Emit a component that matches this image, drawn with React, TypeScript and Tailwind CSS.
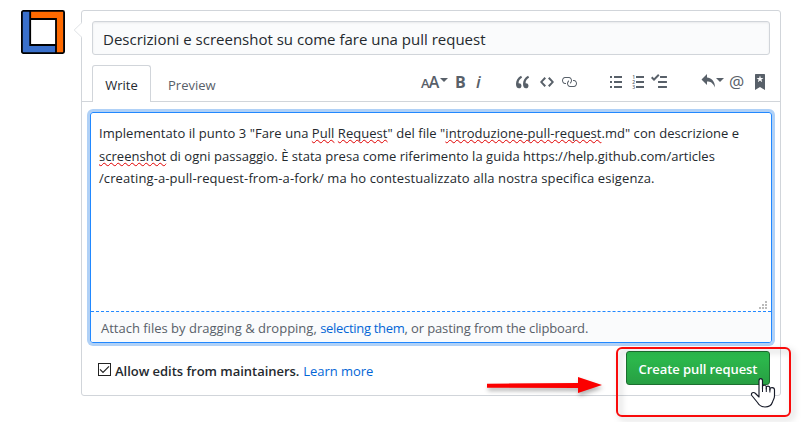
import React from "react";

type IconProps = { w: number; d: string; className?: string };

const Icon = ({ w, d, className = "" }: IconProps) => (
  <svg width={w} height="16" viewBox={`0 0 ${w} 16`} fill="currentColor" className={`block shrink-0 ${className}`}>
    <path fillRule="evenodd" d={d} />
  </svg>
);

const Caret = ({ className = "" }: { className?: string }) => (
  <svg width="8" height="16" viewBox="0 0 8 16" fill="currentColor" className={`block shrink-0 ${className}`}>
    <path d="M0 4h8L4 8z" />
  </svg>
);

const paths = {
  quote:
    "M6.16 3.5C3.73 5.06 2.55 6.67 2.55 9.36c.16-.05.3-.05.44-.05 1.27 0 2.5.86 2.5 2.41 0 1.61-1.03 2.61-2.5 2.61-1.9 0-2.99-1.52-2.99-4.25 0-3.8 1.75-6.53 5.02-8.42L6.16 3.5zm7 0c-2.43 1.56-3.61 3.17-3.61 5.86.16-.05.3-.05.44-.05 1.27 0 2.5.86 2.5 2.41 0 1.61-1.03 2.61-2.5 2.61-1.89 0-2.98-1.52-2.98-4.25 0-3.8 1.75-6.53 5.02-8.42l1.14 1.84h-.01z",
  code: "M9.5 3L8 4.5 11.5 8 8 11.5 9.5 13 14 8 9.5 3zm-5 0L0 8l4.5 5L6 11.5 2.5 8 6 4.5 4.5 3z",
  link: "M4 9h1v1H4c-1.5 0-3-1.69-3-3.5S2.55 3 4 3h4c1.45 0 3 1.69 3 3.5 0 1.41-.91 2.72-2 3.25V8.59c.58-.45 1-1.27 1-2.09C10 5.22 8.98 4 8 4H4c-.98 0-2 1.22-2 2.5S3 9 4 9zm9-3h-1v1h1c1 0 2 1.22 2 2.5S13.98 12 13 12H9c-.98 0-2-1.22-2-2.5 0-.83.42-1.64 1-2.09V6.25c-1.09.53-2 1.84-2 3.25C6 11.31 7.55 13 9 13h4c1.45 0 3-1.69 3-3.5S14.5 6 13 6z",
  list: "M0 2h2v2H0zM4 2h8v2H4zM0 7h2v2H0zM4 7h8v2H4zM0 12h2v2H0zM4 12h8v2H4z",
  task: "M15.41 9H7.59C7 9 7 8.59 7 8c0-.59 0-1 .59-1h7.81c.59 0 .59.41.59 1 0 .59 0 1-.59 1h.01zM9.59 4C9 4 9 3.59 9 3c0-.59 0-1 .59-1h5.81c.59 0 .59.41.59 1 0 .59 0 1-.59 1H9.59zM0 3.91l1.41-1.3L3 4.2 7.09 0 8.5 1.41 3 6.91l-3-3zM7.59 12h7.81c.59 0 .59.41.59 1 0 .59 0 1-.59 1H7.59C7 14 7 13.59 7 13c0-.59 0-1 .59-1z",
  reply: "M6 3.5c3.92.44 8 3.125 8 10-2.312-5.062-4.75-6-8-6V11L.5 5.5 6 0v3.5z",
  bookmark:
    "M9 0H1C.27 0 0 .27 0 1v15l5-3.09L10 16V1c0-.73-.27-1-1-1zm-.78 4.25L6.36 5.61l.72 2.16c.06.22-.02.28-.2.17L5 6.6 3.12 7.94c-.19.11-.25.05-.2-.17l.72-2.16-1.86-1.36c-.17-.16-.14-.23.09-.23l2.3-.03.7-2.16h.25l.7 2.16 2.3.03c.23 0 .27.08.09.23h.01z",
};

const Misspelled = ({ children }: { children: React.ReactNode }) => (
  <span className="underline decoration-[#e00000] decoration-wavy decoration-[0.8px] underline-offset-[1px] [text-decoration-skip-ink:none]">
    {children}
  </span>
);

const Avatar = () => (
  <svg width="44" height="44" viewBox="0 0 44 44" className="mt-[10px] ml-[21px] block shrink-0">
    <rect x="0.75" y="0.75" width="42.5" height="42.5" rx="1.5" fill="#3a70cb" />
    <path d="M9.5 1h33v42H35V9H9.5z" fill="#ff6a00" />
    <rect x="9" y="9" width="26" height="26" fill="#fff" />
    <path d="M9.2 1v34H35M9 9h26v34" fill="none" stroke="#000" strokeWidth="1.8" />
    <rect x="0.9" y="0.9" width="42.2" height="42.2" rx="1.5" fill="none" stroke="#000" strokeWidth="1.8" />
  </svg>
);

const Toolbar = () => (
  <div className="flex h-4 items-center text-[#586069]">
    <span className="flex w-[17px] items-baseline leading-4 font-semibold">
      <span className="text-[13px] tracking-[-0.8px]">A</span>
      <span className="text-[16px]">A</span>
    </span>
    <Caret className="ml-[2px]" />
    <span className="ml-[7px] w-[10px] text-[16px] leading-4 font-bold">B</span>
    <span className="ml-[11px] w-[6px] text-[17px] leading-4 font-semibold italic">i</span>
    <Icon w={14} d={paths.quote} className="ml-[34px]" />
    <Icon w={14} d={paths.code} className="ml-[10px]" />
    <Icon w={16} d={paths.link} className="ml-[7px]" />
    <Icon w={12} d={paths.list} className="ml-[33px]" />
    <svg width="12" height="16" viewBox="0 0 12 16" fill="currentColor" className="ml-[10px] block shrink-0">
      <path d="M4 2h8v2H4zM4 7h8v2H4zM4 12h8v2H4z" />
      <text x="0.3" y="4.5" fontSize="5" fontWeight="600">1</text>
      <text x="0.3" y="9.8" fontSize="5" fontWeight="600">2</text>
      <text x="0.3" y="15" fontSize="5" fontWeight="600">3</text>
    </svg>
    <Icon w={16} d={paths.task} className="ml-[7px]" />
    <Icon w={14} d={paths.reply} className="ml-[34px]" />
    <Caret className="ml-[1px]" />
    <span className="ml-[5px] w-[16px] text-[17px] leading-4">@</span>
    <Icon w={10} d={paths.bookmark} className="ml-[10px]" />
  </div>
);

export default function App() {
  return (
    <div className="relative flex h-[422px] w-[808px] items-start overflow-hidden bg-white font-['Open_Sans',sans-serif] text-[#24292e]">
      <Avatar />
      <main className="relative mt-[10px] ml-4 flex h-[386px] w-[700px] shrink-0 flex-col rounded-[3px] border border-[#d1d5da] whitespace-nowrap">
        <svg width="9" height="16" viewBox="0 0 9 16" className="absolute top-[11px] -left-[9px]">
          <path d="M9 0.5L1.2 8L9 15.5" fill="#fff" stroke="#dfe2e5" />
        </svg>
        <div className="mt-[10px] ml-[10px] flex h-[34px] w-[678px] items-center rounded-[3px] border border-[#d1d5da] bg-[#fafbfc] pt-[2px] pl-[10px] text-[15px] shadow-[inset_0_1px_2px_rgba(27,31,35,0.075)]">
          <span>Descrizioni e screenshot su come fare una pull request</span>
        </div>
        <div className="mt-[10px] flex h-[37px] items-start border-b border-[#d1d5da] pl-[10px] text-[13px]">
          <div className="flex h-[37px] w-[59px] items-center justify-center rounded-t-[3px] border border-b-0 border-[#d1d5da] bg-white pt-[4px]">
            Write
          </div>
          <div className="flex h-[37px] w-[270px] items-center pt-[4px] pl-[17px] text-[#586069]">Preview</div>
          <div className="pt-[9px]">
            <Toolbar />
          </div>
        </div>
        <div className="mt-[10px] ml-2 flex h-[231px] w-[682px] shrink-0 flex-col rounded-[3px] border border-[#2188ff] shadow-[0_0_0_3px_#b0d1f7]">
          <div className="relative h-[198px] pt-[9px] pl-2 text-[13px] leading-[22.6px]">
            <p className="tracking-[0.045px]">
              Implementato il punto 3 "Fare una <Misspelled>Pull</Misspelled> <Misspelled>Request</Misspelled>" del file "
              <Misspelled>introduzione-pull-request</Misspelled>.md" con descrizione e
            </p>
            <p className="tracking-[0.03px]">
              <Misspelled>screenshot</Misspelled> di ogni passaggio. È stata presa come riferimento la guida https://help.github.com/articles
            </p>
            <p className="tracking-[0.1px]">
              /creating-a-pull-request-from-a-fork/ ma ho contestualizzato alla nostra specifica esigenza.
            </p>
            <svg width="9" height="9" viewBox="0 0 9 9" fill="#bbb" className="absolute right-[3px] bottom-[1px]">
              <path d="M6 0h2v2H6zM3 3h2v2H3zM6 3h2v2H6zM0 6h2v2H0zM3 6h2v2H3zM6 6h2v2H6z" />
            </svg>
          </div>
          <div className="flex h-[31px] items-center rounded-b-[2px] border-t border-dashed border-[#2188ff] bg-[#fafbfc] pt-[3px] pl-[10px] text-[13px] text-[#586069]">
            <span>
              Attach files by dragging &amp; dropping, <span className="tracking-[-0.3px] text-[#0366d6]">selecting them</span>
              <span className="tracking-[-0.12px]">, or pasting from the clipboard.</span>
            </span>
          </div>
        </div>
        <div className="mt-2 flex h-[34px] items-center pr-[10px] pl-4 text-[13px]">
          <svg width="13" height="13" viewBox="0 0 13 13" fill="none" stroke="#222" className="mt-[3px]">
            <rect x="0.5" y="0.5" width="12" height="12" />
            <path d="M2 6.3L5 9.3L11 3.3" strokeWidth="1.2" />
          </svg>
          <span className="mt-[7px] ml-1 font-semibold tracking-[-0.03px]">Allow edits from maintainers.</span>
          <span className="mt-[7px] ml-1 tracking-[-0.05px] text-[#0366d6]">Learn more</span>
          <button className="ml-auto flex h-[34px] w-[144px] items-center justify-center rounded-[3px] border border-[#1d6f30] bg-linear-to-b from-[#2dbe4e] to-[#279f43] pt-[3px] text-[13px] font-semibold tracking-[-0.08px] text-white">
            Create pull request
          </button>
        </div>
      </main>
      <div className="absolute top-[347px] left-[616px] h-[70px] w-[175px] rounded-[6px] border-2 border-[#f90b0b] drop-shadow-[3px_3px_3px_rgba(0,0,0,0.25)]" />
      <svg width="120" height="28" viewBox="0 0 120 28" className="absolute top-[372px] left-[485px] drop-shadow-[1px_3px_2px_rgba(0,0,0,0.3)]">
        <path d="M2 11.7L93 11V5l24 8-24 8v-5L2 15.7z" fill="#fb0000" />
      </svg>
      <svg width="26" height="32" viewBox="0 0 26 32" className="absolute top-[377px] left-[750px]">
        <path
          d="M9 20V3.8C9 .9 12.5.9 12.5 3.8V12V9.7c0-2 3.8-2 3.8.4V12v-1.5c0-2 3.6-1.8 3.6.5V13v-1c0-2 4.6-1.8 4.6.8V19c0 3-1.5 4-2 6-1 3.4-3.5 5-7.5 5s-6-2-7.5-4.5L1.8 18.5C.5 16 3.5 14.5 5.5 16.5L9 20z"
          fill="#fff"
          stroke="#171b29"
          strokeWidth="1.15"
          strokeLinejoin="round"
        />
        <path d="M12.5 10v5M16.3 10.5v4.5M19.9 11.5v4" stroke="#171b29" strokeWidth="1" />
      </svg>
    </div>
  );
}
